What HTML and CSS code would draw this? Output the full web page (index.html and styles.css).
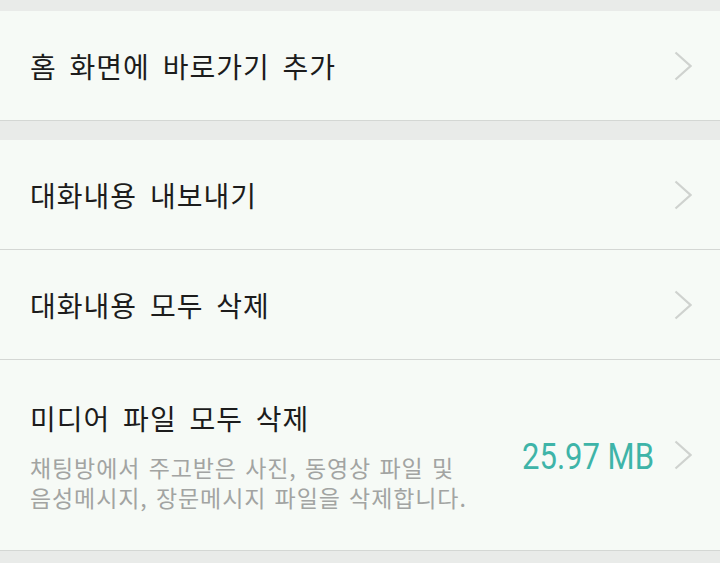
FILE: index.html
```html
<!DOCTYPE html>
<html lang="ko">
<head>
<meta charset="utf-8">
<link rel="stylesheet" href="styles.css">
</head>
<body>
<div class="page">
  <div class="group">
    <div class="row">
      <div class="label">홈 화면에 바로가기 추가</div>
      <svg class="chev" viewBox="0 0 18 30"><polyline points="1.5,1.5 16.5,15 1.5,28.5"/></svg>
    </div>
  </div>
  <div class="group">
    <div class="row">
      <div class="label">대화내용 내보내기</div>
      <svg class="chev" viewBox="0 0 18 30"><polyline points="1.5,1.5 16.5,15 1.5,28.5"/></svg>
    </div>
    <div class="row">
      <div class="label">대화내용 모두 삭제</div>
      <svg class="chev" viewBox="0 0 18 30"><polyline points="1.5,1.5 16.5,15 1.5,28.5"/></svg>
    </div>
    <div class="row tall">
      <div class="text">
        <div class="label">미디어 파일 모두 삭제</div>
        <div class="desc">채팅방에서 주고받은 사진, 동영상 파일 및</div>
        <div class="desc">음성메시지, 장문메시지 파일을 삭제합니다.</div>
      </div>
      <span class="size">25.97 MB</span>
      <svg class="chev" viewBox="0 0 18 30"><polyline points="1.5,1.5 16.5,15 1.5,28.5"/></svg>
    </div>
  </div>
</div>
</body>
</html>
```

FILE: styles.css
```css
html, body {
  margin: 0;
  padding: 0;
  background: #e9ebe9;
  font-family: "Noto Sans CJK KR", "Noto Sans", sans-serif;
}
.page {
  padding-top: 11px;
  width: 720px;
  height: 563px;
  overflow: hidden;
}
.group {
  background: #f6faf6;
  margin-bottom: 19px;
}
.row {
  display: flex;
  align-items: center;
  height: 109px;
  border-bottom: 1px solid #d4d7d4;
  padding: 0 28px 0 30px;
}
.row.tall {
  height: 190px;
}
.label {
  flex: 1;
  font-size: 28px;
  color: #1c1c1c;
  line-height: 36px;
  letter-spacing: 1px;
  word-spacing: 4px;
}
.text {
  flex: 1;
  padding-top: 2px;
}
.text .label {
  margin-bottom: 16px;
}
.desc {
  font-size: 23px;
  line-height: 30px;
  height: 30px;
  color: #a2a4a2;
  letter-spacing: 0.9px;
  word-spacing: 1px;
  white-space: nowrap;
}
.size {
  font-family: Roboto, "Noto Sans", sans-serif;
  font-size: 31px;
  color: #3eb4a8;
  display: inline-block;
  transform: scaleY(1.2);
  margin-right: 20px;
  margin-top: 2px;
}
.chev {
  width: 18px;
  height: 30px;
  flex: none;
}
.chev polyline {
  fill: none;
  stroke: #cfd2cf;
  stroke-width: 2.2;
}
```
